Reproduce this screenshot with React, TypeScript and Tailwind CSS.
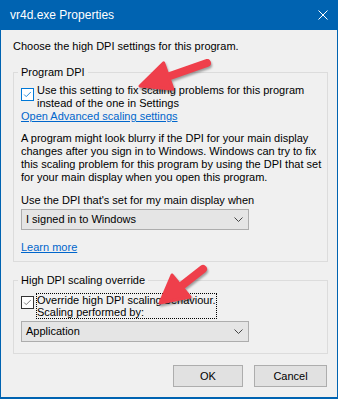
import React from 'react'

function Check({ color }: { color: string }) {
  return (
    <svg width="13" height="13" viewBox="0 0 13 13" className="block">
      <path d="M2.5 6.5 L5 9 L10.5 3.5" fill="none" stroke={color} strokeWidth="1" />
    </svg>
  )
}

function Chevron() {
  return (
    <svg width="9" height="5" viewBox="0 0 9 5" className="block">
      <path d="M0.5 0.5 L4.5 4.5 L8.5 0.5" fill="none" stroke="#444" strokeWidth="1" />
    </svg>
  )
}

function Select({ value }: { value: string }) {
  return (
    <div className="w-[228px] h-[21px] flex items-center justify-between bg-[#e5e5e5] border border-[#adadad] pl-[4px] pr-[5px]">
      <span>{value}</span>
      <Chevron />
    </div>
  )
}

export default function App() {
  return (
    <div className="relative w-[338px] h-[399px] flex flex-col bg-[#0063b1] font-['Liberation_Sans',Arial,sans-serif] text-[11px] leading-[13px] text-black">
      <div className="h-[30px] shrink-0 flex items-center justify-between pl-[10px] pr-[10px] text-white text-[12px]">
        <span>vr4d.exe Properties</span>
        <svg width="10" height="10" viewBox="0 0 10 10" className="block">
          <path d="M0.5 0.5 L9.5 9.5 M9.5 0.5 L0.5 9.5" stroke="white" strokeWidth="1" />
        </svg>
      </div>

      <div className="flex-1 mx-px mb-[2px] bg-[#f0f0f0] pt-[10px] pl-[12px]">
        <p>Choose the high DPI settings for this program.</p>

        <fieldset className="mt-[13px] w-[315px] border border-[#dcdcdc] p-0 m-0 min-w-0">
          <legend className="ml-[4px] px-[3px]">Program DPI</legend>
          <div className="px-[7px] pb-[7px]">
            <div className="mt-[5px] flex items-start gap-[3px]">
              <span className="mt-[4px] w-[13px] h-[13px] bg-white border border-[#0078d7] flex items-center justify-center">
                <Check color="#0078d7" />
              </span>
              <span className="whitespace-nowrap">
                Use this setting to fix scaling problems for this program
                <br />
                instead of the one in Settings
              </span>
            </div>
            <a className="block w-fit text-[#0066cc] underline">Open Advanced scaling settings</a>
            <p className="mt-[9px] whitespace-nowrap">
              A program might look blurry if the DPI for your main display
              <br />
              changes after you sign in to Windows. Windows can try to fix
              <br />
              this scaling problem for this program by using the DPI that set
              <br />
              for your main display when you open this program.
            </p>
            <p className="mt-[10px]">Use the DPI that's set for my main display when</p>
            <div className="mt-[2px]">
              <Select value="I signed in to Windows" />
            </div>
            <a className="mt-[11px] block w-fit text-[#0066cc] underline">Learn more</a>
          </div>
        </fieldset>

        <fieldset className="mt-[12px] w-[315px] border border-[#dcdcdc] p-0 m-0 min-w-0">
          <legend className="ml-[4px] px-[3px]">High DPI scaling override</legend>
          <div className="px-[7px] pb-[11px]">
            <div className="mt-[6px] flex items-start gap-[2px]">
              <span className="mt-[3px] w-[13px] h-[13px] bg-white border border-[#333333] flex items-center justify-center">
                <Check color="#666666" />
              </span>
              <span className="border border-dotted border-black leading-[12px] whitespace-nowrap">
                Override high DPI scaling behaviour.
                <br />
                Scaling performed by:
              </span>
            </div>
            <div className="mt-[2px]">
              <Select value="Application" />
            </div>
          </div>
        </fieldset>

        <div className="mt-[11px] w-[314px] flex justify-end gap-[11px]">
          <button className="w-[70px] h-[22px] bg-[#e1e1e1] border border-[#adadad]">OK</button>
          <button className="w-[73px] h-[22px] bg-[#e1e1e1] border border-[#adadad]">Cancel</button>
        </div>
      </div>

      <svg
        width="338"
        height="399"
        viewBox="0 0 338 399"
        className="absolute inset-0 pointer-events-none drop-shadow-[1px_2px_1px_rgba(0,0,0,0.35)]"
      >
        <g fill="#ef3f4b" stroke="#ef3f4b" strokeLinejoin="round" strokeLinecap="round">
          <line x1="207" y1="63" x2="167" y2="77" strokeWidth="8" />
          <polygon points="140,86 163.6,62.8 173,89.2" strokeWidth="3" />
          <line x1="203" y1="269" x2="180" y2="287" strokeWidth="8" />
          <polygon points="160,303 172,275 190,297" strokeWidth="3" />
        </g>
      </svg>
    </div>
  )
}
